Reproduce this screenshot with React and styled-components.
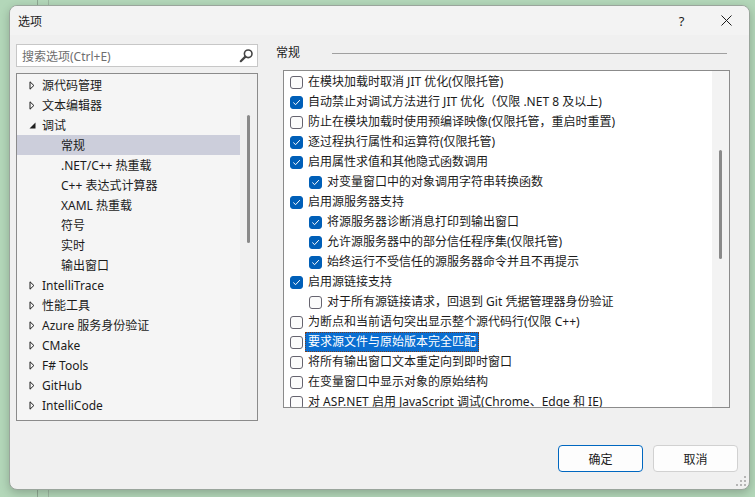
import React from 'react';
import styled, { createGlobalStyle } from 'styled-components';

const Global = createGlobalStyle`
  html, body { margin: 0; padding: 0; }
  body {
    width: 755px; height: 497px; overflow: hidden;
    background: #b3d7b9;
    font-family: "Noto Sans", "Noto Sans CJK SC", sans-serif;
    color: #1b1b1b;
  }
`;

const Desktop = styled.div`
  width: 755px; height: 497px; box-sizing: border-box;
  padding: 5px 0 0 9px;
  background:
    linear-gradient(#8ea892, #8ea892) 37px 0 / 1px 6px no-repeat,
    linear-gradient(#9db7a1, #9db7a1) 48px 0 / 1px 6px no-repeat,
    linear-gradient(#8ea892, #8ea892) 37px 489px / 1px 8px no-repeat,
    linear-gradient(#9db7a1, #9db7a1) 48px 489px / 1px 8px no-repeat,
    #b3d7b9;
`;

const Dialog = styled.div`
  position: relative;
  width: 741px; height: 485px; box-sizing: border-box;
  border: 1px solid #9aa59c;
  border-radius: 8px;
  background: #f0f0f0;
  box-shadow: 0 3px 10px rgba(0,0,0,0.22);
  display: flex; flex-direction: column;
  overflow: hidden;
`;

const TitleBar = styled.div`
  height: 29px; flex: none;
  background: #f3f3f3;
  display: flex; align-items: center;
  padding-left: 8px;
  font-size: 12px;
`;

const TitleText = styled.div`
  flex: 1;
  padding-top: 1px;
`;

const CaptionButton = styled.div`
  width: 45px; height: 29px;
  display: flex; align-items: center; justify-content: center;
  font-size: 13px; color: #1b1b1b;
`;

const Body = styled.div`
  display: flex;
  height: 386px; box-sizing: border-box;
  padding: 9px 0 0 6px;
`;

const LeftCol = styled.div`
  width: 242px; flex: none;
  display: flex; flex-direction: column; gap: 6px;
`;

const Search = styled.div`
  height: 23px; box-sizing: border-box;
  border: 1px solid #c7c7c7;
  background: #ffffff;
  display: flex; align-items: center;
  padding: 0 3px 0 5px;
  font-size: 12px; color: #6e6e6e;
`;

const SearchText = styled.div`
  flex: 1;
`;

const Tree = styled.div`
  height: 348px; box-sizing: border-box;
  border: 1px solid #8b8b8b;
  background: #f5f5f5;
  display: flex;
  overflow: hidden;
`;

const TreeItems = styled.div`
  flex: 1;
  padding-top: 1px;
`;

const TreeRow = styled.div`
  height: 20px;
  display: flex; align-items: center;
  padding-left: ${p => 10 + p.$level * 19}px;
  background: ${p => (p.$selected ? '#cccedb' : 'transparent')};
  font-size: 12px;
  white-space: nowrap;
`;

const Expander = styled.div`
  width: 15px; flex: none;
  display: flex; align-items: center;
  padding-left: 2px; box-sizing: border-box;
`;

const ScrollTrack = styled.div`
  width: ${p => p.$w}px; flex: none;
  background: ${p => p.$bg};
  display: flex; justify-content: center;
`;

const Thumb = styled.div`
  width: 3px; border-radius: 2px;
  background: #8a8a8a;
  margin-top: ${p => p.$top}px;
  height: ${p => p.$h}px;
`;

const RightCol = styled.div`
  width: 454px; margin-left: 18px; flex: none;
  display: flex; flex-direction: column;
`;

const Header = styled.div`
  height: 16px;
  display: flex; align-items: center;
  font-size: 12px;
  margin-bottom: 10px;
`;

const HeaderLine = styled.div`
  flex: 1; height: 1px; background: #a0a0a0;
  margin: 2px 3px 0 32px;
`;

const OptionsBox = styled.div`
  margin-left: 7px;
  width: 447px; height: 338px; box-sizing: border-box;
  border: 1px solid #8b8b8b;
  background: #ffffff;
  display: flex;
  overflow: hidden;
`;

const OptionList = styled.div`
  flex: 1;
  padding-top: 1px;
`;

const OptionRow = styled.div`
  height: 20px;
  display: flex; align-items: center;
  padding-left: ${p => 6 + p.$level * 19}px;
  gap: 2px;
  font-size: 12px;
  white-space: nowrap;
`;

const Box = styled.div`
  width: 13px; height: 13px; box-sizing: border-box; flex: none;
  border-radius: 3px;
  border: 1px solid ${p => (p.$checked ? '#005fb8' : '#66646f')};
  background: ${p => (p.$checked ? '#005fb8' : '#fbfbfb')};
  display: flex; align-items: center; justify-content: center;
`;

const Label = styled.div`
  line-height: 18px;
  padding: 0 2px;
  border: 1px dotted ${p => (p.$focused ? '#7a3c1c' : 'transparent')};
  background: ${p => (p.$focused ? '#0a6ed1' : 'transparent')};
  color: ${p => (p.$focused ? '#ffffff' : '#1b1b1b')};
`;

const Footer = styled.div`
  display: flex; justify-content: flex-end; gap: 10px;
  padding: 24px 11px 0 0;
`;

const Button = styled.div`
  width: 85px; height: 27px; box-sizing: border-box;
  border-radius: 4px;
  border: 1px solid ${p => (p.$primary ? '#0067c0' : '#d1d1d1')};
  background: #fdfdfd;
  display: flex; align-items: center; justify-content: center;
  font-size: 12px;
`;

const Grip = styled.svg`
  position: absolute; right: 3px; bottom: 3px;
`;

const tree = [
  { label: '源代码管理', level: 0, exp: 'c' },
  { label: '文本编辑器', level: 0, exp: 'c' },
  { label: '调试', level: 0, exp: 'e' },
  { label: '常规', level: 1, selected: true },
  { label: '.NET/C++ 热重载', level: 1 },
  { label: 'C++ 表达式计算器', level: 1 },
  { label: 'XAML 热重载', level: 1 },
  { label: '符号', level: 1 },
  { label: '实时', level: 1 },
  { label: '输出窗口', level: 1 },
  { label: 'IntelliTrace', level: 0, exp: 'c' },
  { label: '性能工具', level: 0, exp: 'c' },
  { label: 'Azure 服务身份验证', level: 0, exp: 'c' },
  { label: 'CMake', level: 0, exp: 'c' },
  { label: 'F# Tools', level: 0, exp: 'c' },
  { label: 'GitHub', level: 0, exp: 'c' },
  { label: 'IntelliCode', level: 0, exp: 'c' },
  { label: 'Live Share', level: 0, exp: 'c' },
];

const options = [
  { label: '在模块加载时取消 JIT 优化(仅限托管)', level: 0, checked: false },
  { label: '自动禁止对调试方法进行 JIT 优化（仅限 .NET 8 及以上)', level: 0, checked: true },
  { label: '防止在模块加载时使用预编译映像(仅限托管，重启时重置)', level: 0, checked: false },
  { label: '逐过程执行属性和运算符(仅限托管)', level: 0, checked: true },
  { label: '启用属性求值和其他隐式函数调用', level: 0, checked: true },
  { label: '对变量窗口中的对象调用字符串转换函数', level: 1, checked: true },
  { label: '启用源服务器支持', level: 0, checked: true },
  { label: '将源服务器诊断消息打印到输出窗口', level: 1, checked: true },
  { label: '允许源服务器中的部分信任程序集(仅限托管)', level: 1, checked: true },
  { label: '始终运行不受信任的源服务器命令并且不再提示', level: 1, checked: true },
  { label: '启用源链接支持', level: 0, checked: true },
  { label: '对于所有源链接请求，回退到 Git 凭据管理器身份验证', level: 1, checked: false },
  { label: '为断点和当前语句突出显示整个源代码行(仅限 C++)', level: 0, checked: false },
  { label: '要求源文件与原始版本完全匹配', level: 0, checked: false, focused: true },
  { label: '将所有输出窗口文本重定向到即时窗口', level: 0, checked: false },
  { label: '在变量窗口中显示对象的原始结构', level: 0, checked: false },
  { label: '对 ASP.NET 启用 JavaScript 调试(Chrome、Edge 和 IE)', level: 0, checked: false },
];

const Collapsed = () => (
  <svg width="6" height="9" viewBox="0 0 6 9">
    <path d="M1 0.8 L4.9 4.5 L1 8.2 Z" fill="none" stroke="#1e1e1e" strokeWidth="1" strokeLinejoin="miter" />
  </svg>
);

const Expanded = () => (
  <svg width="7" height="7" viewBox="0 0 7 7">
    <path d="M6.5 0.5 L6.5 6.5 L0.5 6.5 Z" fill="#1e1e1e" />
  </svg>
);

const Check = () => (
  <svg width="11" height="11" viewBox="0 0 11 11">
    <path d="M2.6 5.8 L4.6 7.7 L8.6 3.4" fill="none" stroke="#ffffff" strokeWidth="1" strokeLinecap="round" strokeLinejoin="round" />
  </svg>
);

const SearchIcon = () => (
  <svg width="15" height="15" viewBox="0 0 15 15">
    <circle cx="9.2" cy="5.8" r="3.8" fill="none" stroke="#444" strokeWidth="1.6" />
    <path d="M6.4 8.6 L1.8 13.2" stroke="#444" strokeWidth="2.2" strokeLinecap="round" />
  </svg>
);

const CloseIcon = () => (
  <svg width="11" height="11" viewBox="0 0 11 11">
    <path d="M0.5 0.5 L10.5 10.5 M10.5 0.5 L0.5 10.5" stroke="#1b1b1b" strokeWidth="1" />
  </svg>
);

export default function App() {
  return (
    <>
      <Global />
      <Desktop>
        <Dialog>
          <TitleBar>
            <TitleText>选项</TitleText>
            <CaptionButton>?</CaptionButton>
            <CaptionButton><CloseIcon /></CaptionButton>
          </TitleBar>
          <Body>
            <LeftCol>
              <Search>
                <SearchText>搜索选项(Ctrl+E)</SearchText>
                <SearchIcon />
              </Search>
              <Tree>
                <TreeItems>
                  {tree.map((t, i) => (
                    <TreeRow key={i} $level={t.level} $selected={t.selected}>
                      <Expander>
                        {t.exp === 'c' && <Collapsed />}
                        {t.exp === 'e' && <Expanded />}
                      </Expander>
                      {t.label}
                    </TreeRow>
                  ))}
                </TreeItems>
                <ScrollTrack $w={17} $bg="#f0f0f0">
                  <Thumb $top={41} $h={128} />
                </ScrollTrack>
              </Tree>
            </LeftCol>
            <RightCol>
              <Header>
                常规
                <HeaderLine />
              </Header>
              <OptionsBox>
                <OptionList>
                  {options.map((o, i) => (
                    <OptionRow key={i} $level={o.level}>
                      <Box $checked={o.checked}>{o.checked && <Check />}</Box>
                      <Label $focused={o.focused}>{o.label}</Label>
                    </OptionRow>
                  ))}
                </OptionList>
                <ScrollTrack $w={17} $bg="#f3f3f3">
                  <Thumb $top={79} $h={109} />
                </ScrollTrack>
              </OptionsBox>
            </RightCol>
          </Body>
          <Footer>
            <Button $primary>确定</Button>
            <Button>取消</Button>
          </Footer>
          <Grip width="10" height="10" viewBox="0 0 10 10">
            <g fill="#b5b5b5">
              <rect x="8" y="0" width="2" height="2" />
              <rect x="4" y="4" width="2" height="2" />
              <rect x="8" y="4" width="2" height="2" />
              <rect x="0" y="8" width="2" height="2" />
              <rect x="4" y="8" width="2" height="2" />
              <rect x="8" y="8" width="2" height="2" />
            </g>
          </Grip>
        </Dialog>
      </Desktop>
    </>
  );
}
